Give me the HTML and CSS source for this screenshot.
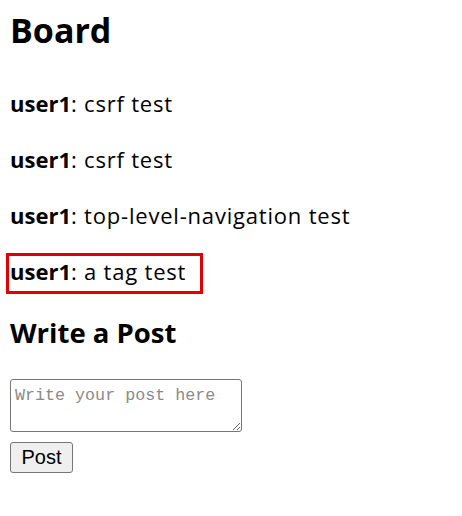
FILE: index.html
```html
<!DOCTYPE html>
<html lang="en">
<head>
  <meta charset="UTF-8">
  <meta name="viewport" content="width=device-width, initial-scale=1.0">
  <title>Board</title>
  <link rel="stylesheet" href="styles.css">
</head>
<body>
  <h1>Board</h1>

  <div class="posts">
    <p><strong>user1</strong>: csrf test</p>
    <p><strong>user1</strong>: csrf test</p>
    <p><strong>user1</strong>: top-level-navigation test</p>
    <p><span class="flag"><strong>user1</strong>: a tag test</span></p>
  </div>

  <h2>Write a Post</h2>

  <form class="compose">
    <textarea placeholder="Write your post here"></textarea>
    <button type="submit">Post</button>
  </form>
</body>
</html>
```

FILE: styles.css
```css
body {
  margin: 0;
  padding: 6px 10px;
  font-family: "Open Sans", "Noto Sans CJK KR", sans-serif;
  font-size: 22px;
  letter-spacing: 0.8px;
  color: #000;
  background: #fff;
}
h1 {
  font-size: 34px;
  line-height: 49px;
  font-weight: 700;
  letter-spacing: 0;
  margin: 0 0 30px;
}
.posts p {
  line-height: 36px;
  margin: 0 0 20px;
}
.posts strong {
  font-weight: 700;
  letter-spacing: 0;
}
.flag {
  display: inline-block;
  position: relative;
}
.flag::after {
  content: "";
  position: absolute;
  top: 0;
  bottom: -5px;
  left: -4px;
  right: -17px;
  border: 3px solid #e00000;
}
h2 {
  font-size: 27.5px;
  line-height: 38px;
  font-weight: 700;
  letter-spacing: 0;
  margin: 25px 0 27px;
}
.compose textarea {
  display: block;
  box-sizing: border-box;
  width: 232px;
  height: 53px;
  margin: 0 0 10px;
  padding: 6px 4px 2px;
  border: 1px solid #767676;
  border-radius: 3px;
  font-family: "Liberation Mono", monospace;
  font-size: 16.7px;
  letter-spacing: 0;
}
.compose textarea::placeholder {
  color: #8a8a8a;
}
.compose button {
  display: block;
  box-sizing: border-box;
  width: 63px;
  height: 31px;
  padding: 0;
  background: #efefef;
  border: 1px solid #767676;
  border-radius: 3px;
  font-family: "Liberation Sans", Arial, sans-serif;
  font-size: 20px;
  letter-spacing: 0;
  color: #000;
}
```
